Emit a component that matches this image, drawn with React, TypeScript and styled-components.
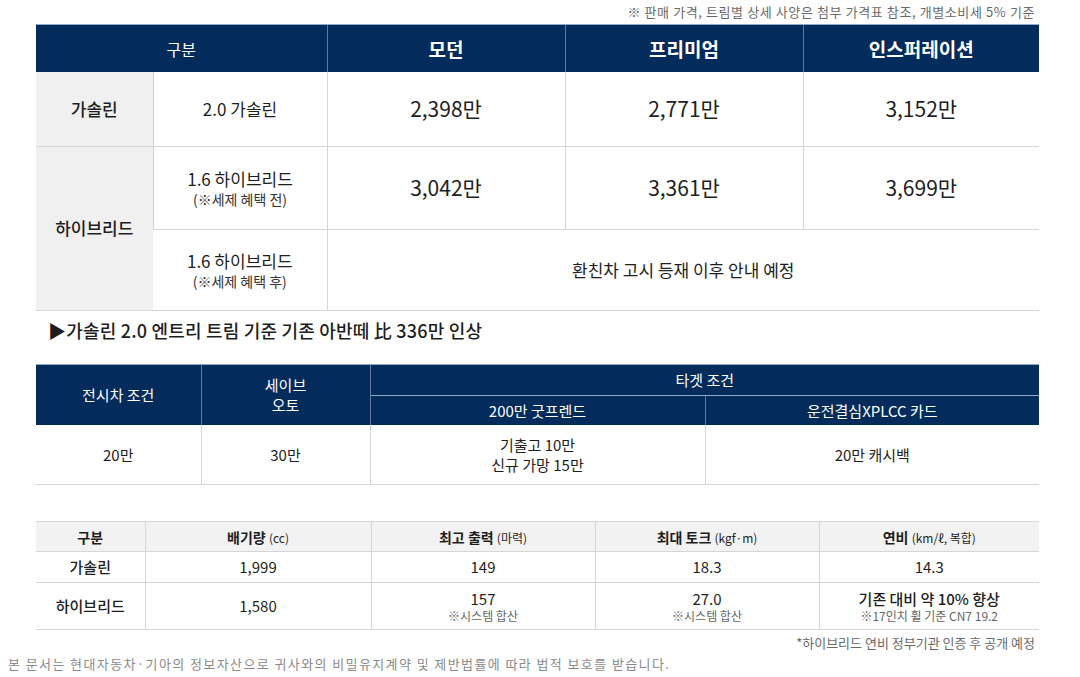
import * as React from 'react'
import styled, { createGlobalStyle } from 'styled-components'

const navy = '#032b5c'
const line = '#d6d6d6'
const ink = '#1e1e1e'

const GlobalStyle = createGlobalStyle`
  body {
    margin: 0;
    background: #fff;
    font-family: "Noto Sans CJK KR", "Noto Sans", sans-serif;
    color: ${ink};
  }
`

const Page = styled.div`
  width: 1080px;
  height: 677px;
  box-sizing: border-box;
  padding-top: 4px;
  overflow: hidden;
`

const Block = styled.div`
  margin-left: 36px;
  width: 1003px;
`

const Note = styled.div<{ mt?: number; spacing?: number }>`
  text-align: right;
  font-size: 13px;
  line-height: 16px;
  height: 16px;
  color: #6a6a6a;
  padding-right: 4px;
  letter-spacing: ${(p) => p.spacing ?? 0}px;
  margin-top: ${(p) => p.mt ?? 0}px;
  margin-bottom: 4px;
`

const Table = styled.table<{ mt?: number }>`
  width: 1003px;
  border-collapse: collapse;
  table-layout: fixed;
  margin-top: ${(p) => p.mt ?? 0}px;
  text-align: center;
`

const HeadCell = styled.th<{ size?: number; weight?: number; h?: number }>`
  background: ${navy};
  color: #fff;
  font-size: ${(p) => p.size ?? 15}px;
  font-weight: ${(p) => p.weight ?? 400};
  height: ${(p) => p.h ?? 30}px;
  padding: 0;
  border-left: 1px solid #5d7aa3;
  border-top: 1px solid #8fa9c9;
  line-height: 20px;
  &:first-child {
    border-left: none;
  }
`

const Cell = styled.td<{ size?: number; weight?: number; h?: number; shade?: boolean }>`
  font-size: ${(p) => p.size ?? 15}px;
  font-weight: ${(p) => p.weight ?? 400};
  height: ${(p) => p.h ?? 30}px;
  background: ${(p) => (p.shade ? '#f0f0f0' : '#fff')};
  border-bottom: 1px solid ${line};
  border-left: 1px solid ${line};
  padding: 0;
  line-height: 1.3;
  &:first-child {
    border-left: none;
  }
`

const Sub = styled.div`
  font-size: 14px;
  font-weight: 400;
  color: #333;
  line-height: 18px;
`

const Small = styled.div`
  font-size: 12px;
  color: #666;
  font-weight: 400;
  line-height: 15px;
`

const Unit = styled.span`
  font-size: 12px;
  font-weight: 400;
`

const Remark = styled.div`
  margin: 7px 0 22px 12px;
  font-size: 18px;
  font-weight: 500;
  line-height: 24px;
  letter-spacing: 0.2px;
`

const SpecHead = styled.th`
  background: #f2f2f2;
  font-size: 14px;
  font-weight: 700;
  height: 29px;
  padding: 0;
  border-top: 1px solid ${line};
  border-bottom: 1px solid ${line};
  border-left: 1px solid ${line};
  &:first-child {
    border-left: none;
  }
`

const Legal = styled.div`
  margin: 2px 0 0 8px;
  font-size: 13px;
  color: #8a8a8a;
  letter-spacing: 1.4px;
  line-height: 18px;
`

export default function App() {
  return (
    <Page>
      <GlobalStyle />
      <Block>
        <Note spacing={0.6}>※ 판매 가격, 트림별 상세 사양은 첨부 가격표 참조, 개별소비세 5% 기준</Note>
        <Table>
          <colgroup>
            <col style={{ width: 117 }} />
            <col style={{ width: 174 }} />
            <col style={{ width: 238 }} />
            <col style={{ width: 238 }} />
            <col style={{ width: 236 }} />
          </colgroup>
          <thead>
            <tr>
              <HeadCell colSpan={2} size={16} h={47}>구분</HeadCell>
              <HeadCell size={19} weight={700} h={47}>모던</HeadCell>
              <HeadCell size={19} weight={700} h={47}>프리미엄</HeadCell>
              <HeadCell size={19} weight={700} h={47}>인스퍼레이션</HeadCell>
            </tr>
          </thead>
          <tbody>
            <tr>
              <Cell shade size={17} weight={500} h={74}>가솔린</Cell>
              <Cell size={17}>2.0 가솔린</Cell>
              <Cell size={21}>2,398만</Cell>
              <Cell size={21}>2,771만</Cell>
              <Cell size={21}>3,152만</Cell>
            </tr>
            <tr>
              <Cell shade rowSpan={2} size={17} weight={500}>하이브리드</Cell>
              <Cell size={17} h={82}>
                1.6 하이브리드
                <Sub>(※세제 혜택 전)</Sub>
              </Cell>
              <Cell size={21}>3,042만</Cell>
              <Cell size={21}>3,361만</Cell>
              <Cell size={21}>3,699만</Cell>
            </tr>
            <tr>
              <Cell size={17} h={80}>
                1.6 하이브리드
                <Sub>(※세제 혜택 후)</Sub>
              </Cell>
              <Cell colSpan={3} size={17}>환친차 고시 등재 이후 안내 예정</Cell>
            </tr>
          </tbody>
        </Table>
        <Remark>▶가솔린 2.0 엔트리 트림 기준 기존 아반떼 比 336만 인상</Remark>
        <Table>
          <colgroup>
            <col style={{ width: 165 }} />
            <col style={{ width: 169 }} />
            <col style={{ width: 335 }} />
            <col style={{ width: 334 }} />
          </colgroup>
          <thead>
            <tr>
              <HeadCell rowSpan={2} h={30}>전시차 조건</HeadCell>
              <HeadCell rowSpan={2} h={30}>
                세이브
                <br />
                오토
              </HeadCell>
              <HeadCell colSpan={2} h={30}>타겟 조건</HeadCell>
            </tr>
            <tr>
              <HeadCell h={29} style={{ borderLeft: '1px solid #5d7aa3' }}>200만 굿프렌드</HeadCell>
              <HeadCell h={29}>운전결심XPLCC 카드</HeadCell>
            </tr>
          </thead>
          <tbody>
            <tr>
              <Cell h={59}>20만</Cell>
              <Cell>30만</Cell>
              <Cell>
                기출고 10만
                <br />
                신규 가망 15만
              </Cell>
              <Cell>20만 캐시백</Cell>
            </tr>
          </tbody>
        </Table>
        <Table mt={36}>
          <colgroup>
            <col style={{ width: 109 }} />
            <col style={{ width: 226 }} />
            <col style={{ width: 224 }} />
            <col style={{ width: 224 }} />
            <col style={{ width: 220 }} />
          </colgroup>
          <thead>
            <tr>
              <SpecHead>구분</SpecHead>
              <SpecHead>
                배기량 <Unit>(cc)</Unit>
              </SpecHead>
              <SpecHead>
                최고 출력 <Unit>(마력)</Unit>
              </SpecHead>
              <SpecHead>
                최대 토크 <Unit>(kgf·m)</Unit>
              </SpecHead>
              <SpecHead>
                연비 <Unit>(km/ℓ, 복합)</Unit>
              </SpecHead>
            </tr>
          </thead>
          <tbody>
            <tr>
              <Cell weight={500} h={28}>가솔린</Cell>
              <Cell>1,999</Cell>
              <Cell>149</Cell>
              <Cell>18.3</Cell>
              <Cell>14.3</Cell>
            </tr>
            <tr>
              <Cell weight={500} h={46}>하이브리드</Cell>
              <Cell>1,580</Cell>
              <Cell>
                157
                <Small>※시스템 합산</Small>
              </Cell>
              <Cell>
                27.0
                <Small>※시스템 합산</Small>
              </Cell>
              <Cell weight={500}>
                기존 대비 약 10% 향상
                <Small>※17인치 휠 기준 CN7 19.2</Small>
              </Cell>
            </tr>
          </tbody>
        </Table>
        <Note mt={5}>*하이브리드 연비 정부기관 인증 후 공개 예정</Note>
      </Block>
      <Legal>본 문서는 현대자동차·기아의 정보자산으로 귀사와의 비밀유지계약 및 제반법률에 따라 법적 보호를 받습니다.</Legal>
    </Page>
  )
}
